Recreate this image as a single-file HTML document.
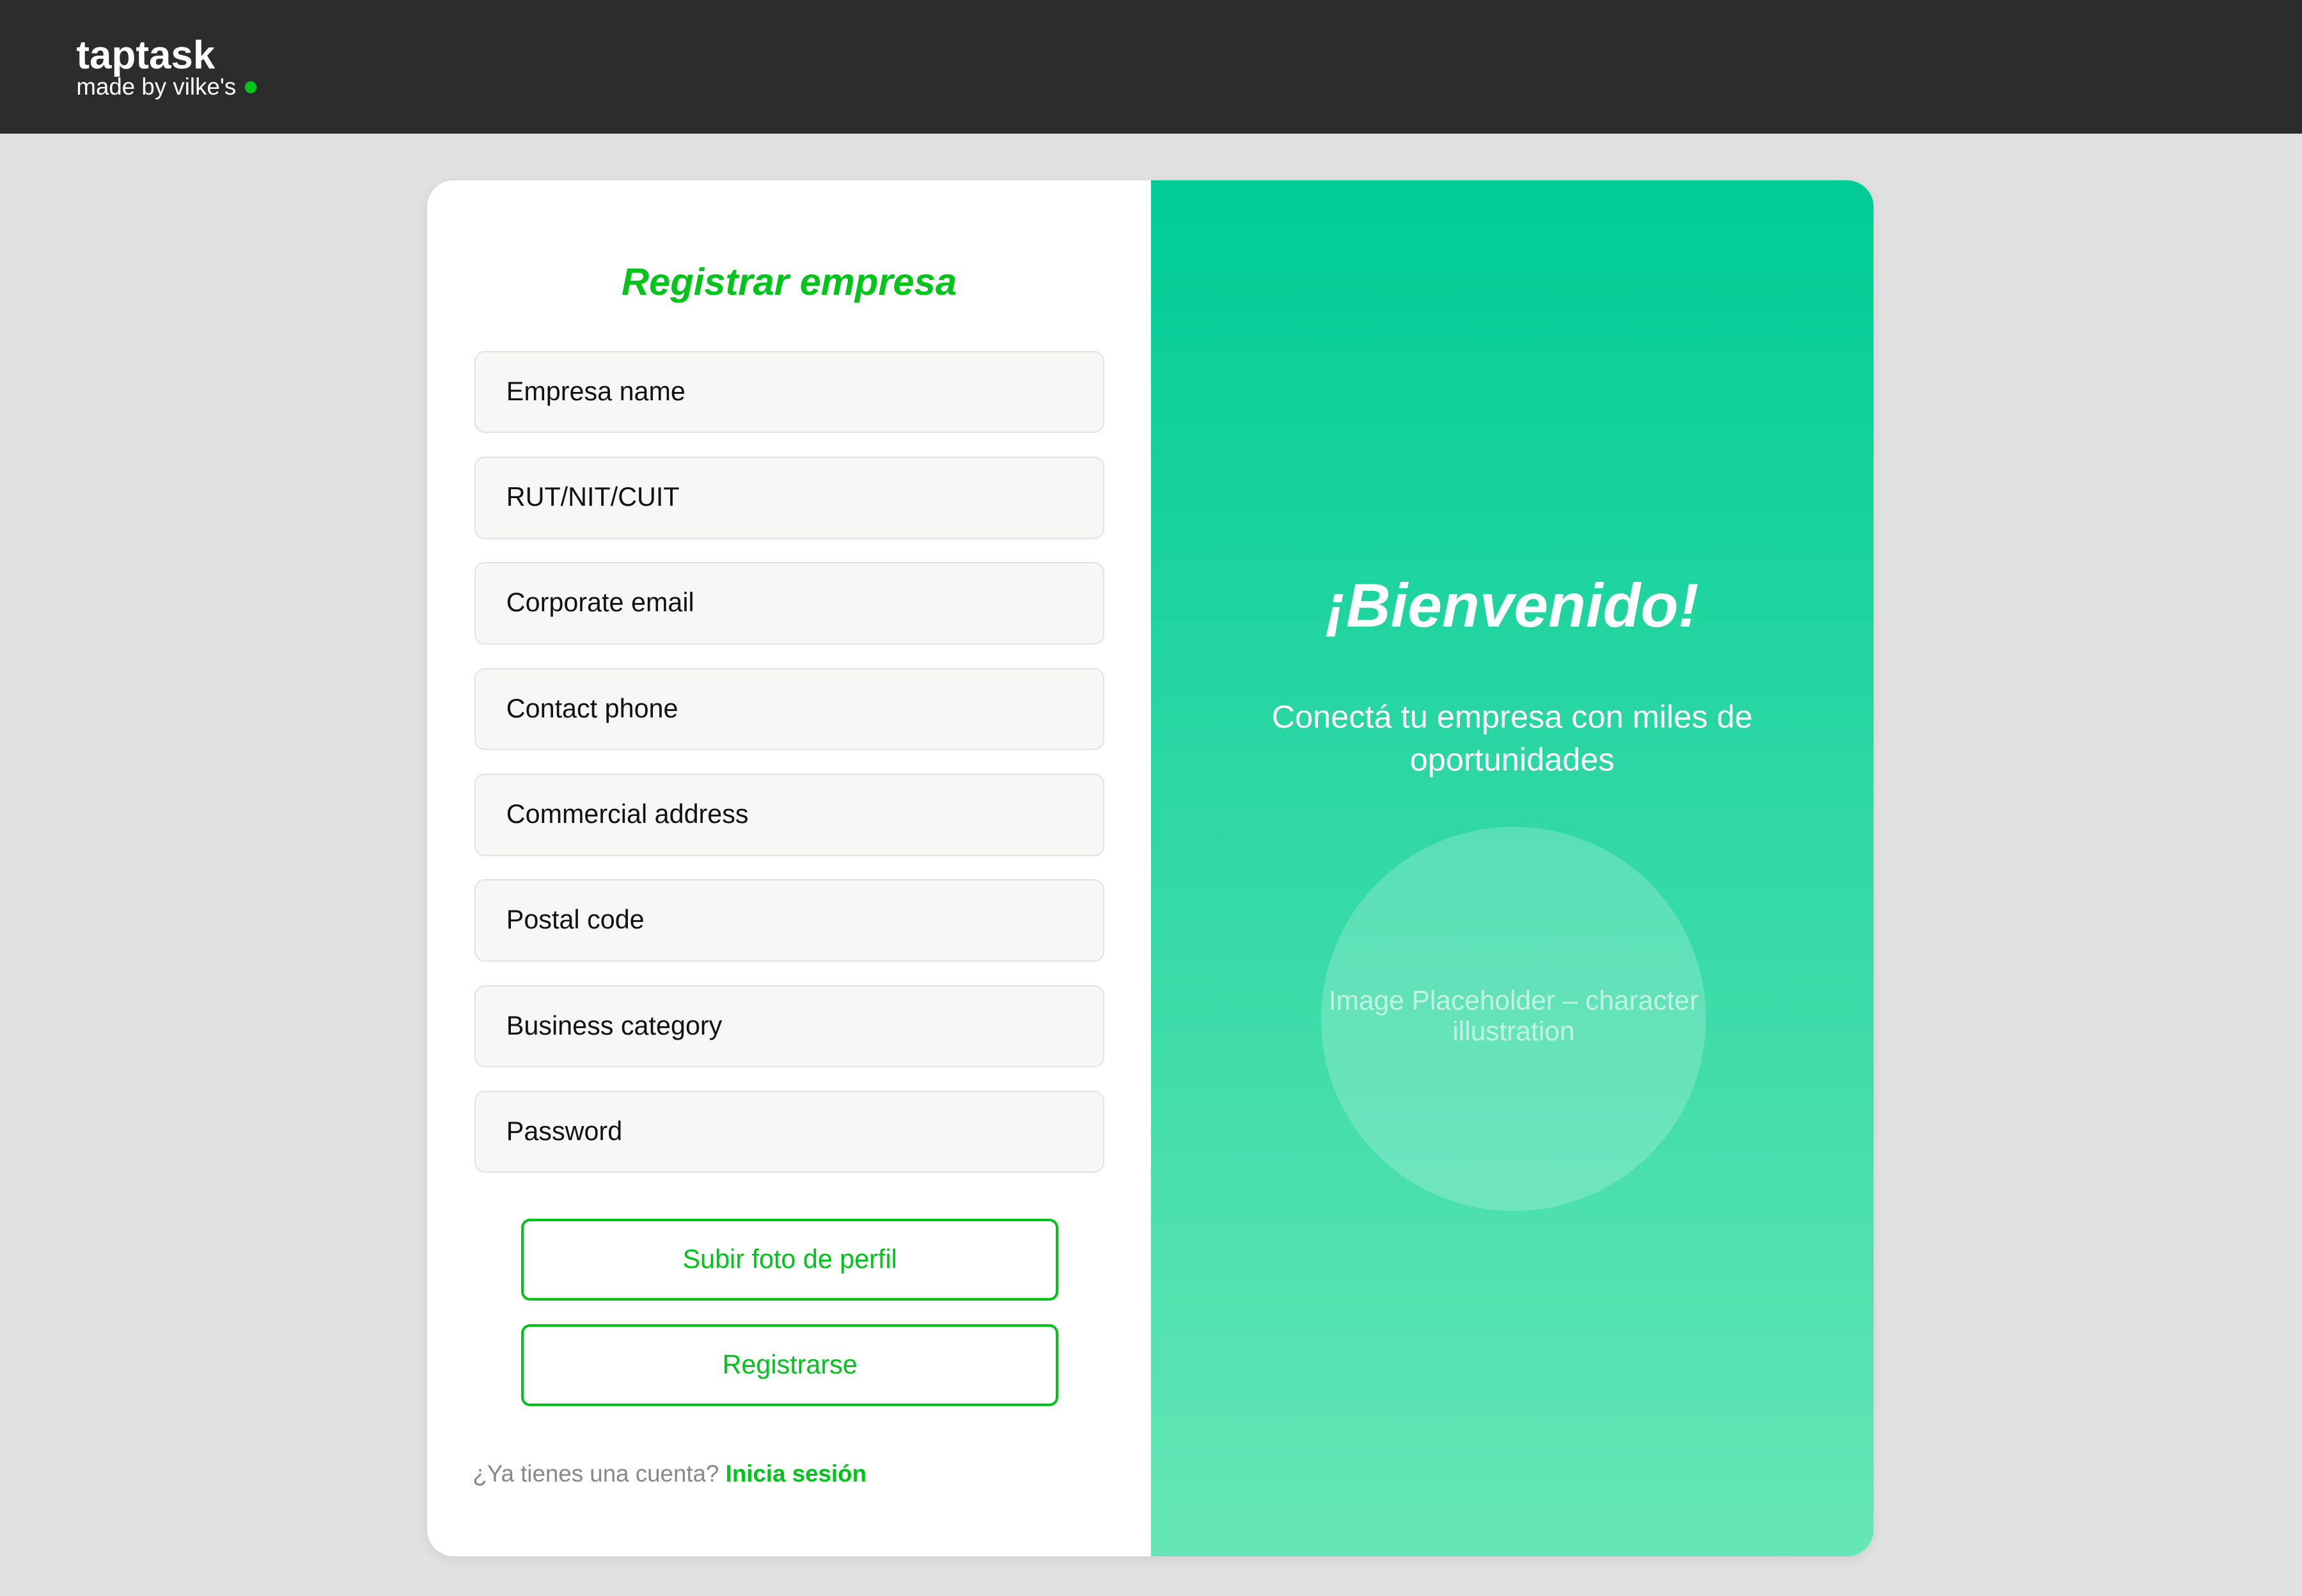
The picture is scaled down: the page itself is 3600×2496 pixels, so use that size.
<!DOCTYPE html>
<html><head><meta charset="utf-8"><style>
html,body{margin:0;padding:0}
body{width:1568px;height:1087px;zoom:2.29592;background:#e1e1e1;font-family:"Liberation Sans",sans-serif;overflow:hidden;position:relative}
.hdr{position:absolute;left:0;top:0;width:1568px;height:91px;background:#2c2c2c}
.logo{position:absolute;left:52px;top:23px;color:#fff;font-weight:bold;font-size:27px;letter-spacing:0px;line-height:30px}
.sub{position:absolute;left:52px;top:50px;color:#fff;font-size:16px}
.dot{display:inline-block;width:8px;height:8px;border-radius:50%;background:#00c41a;margin-left:6px;vertical-align:1px}
.card{position:absolute;left:291px;top:123px;width:985px;height:937px;border-radius:18px;overflow:hidden;background:#fff;box-shadow:0 2px 8px rgba(0,0,0,.08)}
.right{position:absolute;left:493px;top:0;width:492px;height:937px;background:linear-gradient(#00cc96,#66e6b6)}
h1{position:absolute;left:0;width:493px;top:54px;margin:0;text-align:center;color:#00c41a;font-style:italic;font-size:26px;font-weight:bold}
.f{position:absolute;left:32px;height:56px;border:1px solid #e2e2e2;border-radius:7px;background:#f7f7f5;font-size:18px;color:#111;line-height:54px;padding-left:21px;box-sizing:border-box;width:429px}
.b{position:absolute;left:64px;width:366px;height:56px;border:2px solid #00c41a;border-radius:6px;box-sizing:border-box;text-align:center;line-height:52px;color:#00c41a;font-size:18px}
.foot{position:absolute;left:31px;top:872px;font-size:16px;color:#888}
.foot b{color:#00c41a}
.w{position:absolute;left:0;width:492px;text-align:center;color:#fff}
.circ{position:absolute;left:116px;top:440px;width:262px;height:262px;border-radius:50%;background:rgba(255,255,255,.2)}
.ct{position:absolute;left:106px;top:548px;width:282px;text-align:center;color:rgba(255,255,255,.6);font-size:18.5px;line-height:21px}
</style></head><body>
<div class="hdr"><div class="logo">taptask</div><div class="sub">made by vilke's<span class="dot"></span></div></div>
<div class="card">
<h1>Registrar empresa</h1>
<div class="f" style="top:116px">Empresa name</div>
<div class="f" style="top:188px">RUT/NIT/CUIT</div>
<div class="f" style="top:260px">Corporate email</div>
<div class="f" style="top:332px">Contact phone</div>
<div class="f" style="top:404px">Commercial address</div>
<div class="f" style="top:476px">Postal code</div>
<div class="f" style="top:548px">Business category</div>
<div class="f" style="top:620px">Password</div>
<div class="b" style="top:707px">Subir foto de perfil</div>
<div class="b" style="top:779px">Registrarse</div>
<div class="foot">¿Ya tienes una cuenta? <b>Inicia sesión</b></div>
<div class="right">
<div class="w" style="top:266px;font-size:42px;font-weight:bold;font-style:italic">¡Bienvenido!</div>
<div class="w" style="top:351px;font-size:22px;line-height:29px">Conectá tu empresa con miles de<br>oportunidades</div>
<div class="circ"></div>
<div class="ct">Image Placeholder – character illustration</div>
</div>
</div>
</body></html>
